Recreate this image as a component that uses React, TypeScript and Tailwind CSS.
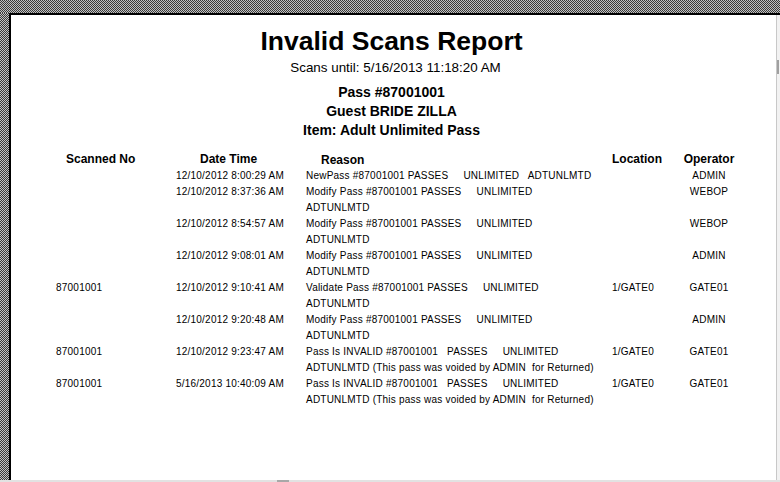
import React from "react";

type Row = {
  no: string;
  date: string;
  reason: string[];
  loc: string;
  op: string;
};

const rows: Row[] = [
  { no: "", date: "12/10/2012 8:00:29 AM", reason: ["NewPass #87001001 PASSES     UNLIMITED   ADTUNLMTD"], loc: "", op: "ADMIN" },
  { no: "", date: "12/10/2012 8:37:36 AM", reason: ["Modify Pass #87001001 PASSES     UNLIMITED", "ADTUNLMTD"], loc: "", op: "WEBOP" },
  { no: "", date: "12/10/2012 8:54:57 AM", reason: ["Modify Pass #87001001 PASSES     UNLIMITED", "ADTUNLMTD"], loc: "", op: "WEBOP" },
  { no: "", date: "12/10/2012 9:08:01 AM", reason: ["Modify Pass #87001001 PASSES     UNLIMITED", "ADTUNLMTD"], loc: "", op: "ADMIN" },
  { no: "87001001", date: "12/10/2012 9:10:41 AM", reason: ["Validate Pass #87001001 PASSES     UNLIMITED", "ADTUNLMTD"], loc: "1/GATE0", op: "GATE01" },
  { no: "", date: "12/10/2012 9:20:48 AM", reason: ["Modify Pass #87001001 PASSES     UNLIMITED", "ADTUNLMTD"], loc: "", op: "ADMIN" },
  {
    no: "87001001",
    date: "12/10/2012 9:23:47 AM",
    reason: ["Pass Is INVALID #87001001   PASSES     UNLIMITED", "ADTUNLMTD (This pass was voided by ADMIN  for Returned)"],
    loc: "1/GATE0",
    op: "GATE01",
  },
  {
    no: "87001001",
    date: "5/16/2013 10:40:09 AM",
    reason: ["Pass Is INVALID #87001001   PASSES     UNLIMITED", "ADTUNLMTD (This pass was voided by ADMIN  for Returned)"],
    loc: "1/GATE0",
    op: "GATE01",
  },
];

const gridCols = "grid grid-cols-[120px_130px_306px_57px_80px] pl-[45px]";

function Checker({ id }: { id: string }) {
  return (
    <svg className="block w-full h-full" shapeRendering="crispEdges">
      <defs>
        <pattern id={id} width="2" height="2" patternUnits="userSpaceOnUse">
          <rect width="2" height="2" fill="#c2c2c2" />
          <rect width="1" height="1" fill="#3a3a3a" />
          <rect x="1" y="1" width="1" height="1" fill="#3a3a3a" />
        </pattern>
      </defs>
      <rect width="100%" height="100%" fill={`url(#${id})`} />
    </svg>
  );
}

export default function App() {
  return (
    <div className="w-[780px] h-[482px] flex flex-col overflow-hidden font-['Liberation_Sans',Arial,sans-serif] text-black">
      <div className="h-[13px] shrink-0">
        <Checker id="chk-top" />
      </div>
      <div className="flex-1 flex min-h-0">
        <div className="w-[9px] shrink-0">
          <Checker id="chk-left" />
        </div>
        <div className="flex-1 flex bg-white border-t-2 border-l-2 border-black min-h-0">
          <div className="flex-1 flex flex-col">
            {/* Title block */}
            <div className="flex flex-col items-center pt-[11px] pr-[4px]">
              <div className="text-[26.5px] leading-[30px] font-bold">Invalid Scans Report</div>
              <div className="mt-[4px] ml-[8px] text-[13.4px] leading-[16px]">Scans until: 5/16/2013 11:18:20 AM</div>
              <div className="mt-[7px] flex flex-col items-center text-[14px] leading-[19px] font-bold">
                <div>Pass #87001001</div>
                <div>Guest BRIDE ZILLA</div>
                <div>Item: Adult Unlimited Pass</div>
              </div>
            </div>

            {/* Table header */}
            <div className={`${gridCols} mt-[10px] text-[12px] leading-[16px] font-bold`}>
              <div className="pl-[10px] pt-[1px]">Scanned No</div>
              <div className="pl-[24px] pt-[1px]">Date Time</div>
              <div className="pl-[15px] pt-[2px]">Reason</div>
              <div className="pt-[1px]">Location</div>
              <div className="text-center pt-[1px]">Operator</div>
            </div>

            {/* Table rows */}
            <div className="flex flex-col text-[10px] leading-[16px] tracking-[0.22px]">
              {rows.map((r, i) => (
                <div key={i} className={gridCols}>
                  <div className="whitespace-pre">{r.no}</div>
                  <div className="whitespace-pre">{r.date}</div>
                  <div className="flex flex-col">
                    {r.reason.map((line, j) => (
                      <div key={j} className="whitespace-pre">
                        {line}
                      </div>
                    ))}
                  </div>
                  <div className="whitespace-pre">{r.loc}</div>
                  <div className="whitespace-pre text-center">{r.op}</div>
                </div>
              ))}
            </div>
          </div>
          <div className="w-[4px] border-l border-[#c8c8c8] bg-[#f2f2f2] flex flex-col">
            <div className="mt-[45px] h-[14px] w-[2px] bg-[#a0a0a0]" />
          </div>
        </div>
      </div>
      <div className="h-[2px] shrink-0 bg-[#e2e2e2] flex pl-[277px]">
        <div className="w-[12px] h-full bg-[#a8a8a8]" />
      </div>
    </div>
  );
}
